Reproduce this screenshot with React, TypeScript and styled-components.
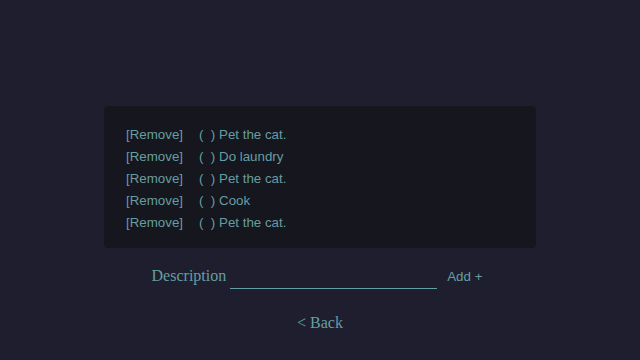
import React from "react"
import styled, { createGlobalStyle } from "styled-components"

const GlobalStyle = createGlobalStyle`
  html, body {
    margin: 0;
    padding: 0;
    background-color: #1e1e2e;
  }
  body {
    height: 360px;
    overflow: hidden;
  }
`

const Page = styled.main`
  display: flex;
  flex-direction: column;
  align-items: center;
  padding-top: 106px;
  color: #659ea2;
`

const TodoPanel = styled.ul`
  box-sizing: border-box;
  width: 432px;
  margin: 0;
  padding: 17px 22px 15px;
  list-style: none;
  background-color: #16161f;
  border-radius: 4px;
`

const TodoRow = styled.li`
  display: flex;
  align-items: center;
  height: 22px;
  font-family: "Liberation Sans", Arial, sans-serif;
  font-size: 13.33px;
`

const RemoveButton = styled.span`
  width: 73px;
  cursor: pointer;
`

const TodoText = styled.span``

const AddRow = styled.form`
  display: flex;
  align-items: flex-end;
  margin-top: 17px;
  margin-left: -6px;
`

const Label = styled.label`
  font-family: "Liberation Serif", "Times New Roman", serif;
  font-size: 16px;
  line-height: 20px;
  margin-right: 4px;
  padding-bottom: 3px;
`

const DescriptionInput = styled.input`
  box-sizing: border-box;
  width: 207px;
  height: 24px;
  background: transparent;
  border: none;
  border-bottom: 1px solid #659ea2;
  outline: none;
  color: #659ea2;
  font-family: "Liberation Sans", Arial, sans-serif;
  font-size: 13px;
`

const AddButton = styled.span`
  font-family: "Liberation Sans", Arial, sans-serif;
  font-size: 13.33px;
  line-height: 20px;
  margin-left: 10px;
  padding-bottom: 2px;
  cursor: pointer;
`

const BackLink = styled.a`
  margin-top: 25px;
  font-family: "Liberation Serif", "Times New Roman", serif;
  font-size: 16px;
  color: #659ea2;
  text-decoration: none;
  cursor: pointer;
`

const todos = ["Pet the cat.", "Do laundry", "Pet the cat.", "Cook", "Pet the cat."]

function App() {
  return (
    <>
      <GlobalStyle />
      <Page>
        <TodoPanel>
          {todos.map((todo, i) => (
            <TodoRow key={i}>
              <RemoveButton>[Remove]</RemoveButton>
              <TodoText>(&nbsp;&nbsp;) {todo}</TodoText>
            </TodoRow>
          ))}
        </TodoPanel>
        <AddRow onSubmit={e => e.preventDefault()}>
          <Label>Description</Label>
          <DescriptionInput />
          <AddButton>Add +</AddButton>
        </AddRow>
        <BackLink>&lt; Back</BackLink>
      </Page>
    </>
  )
}

export default App
